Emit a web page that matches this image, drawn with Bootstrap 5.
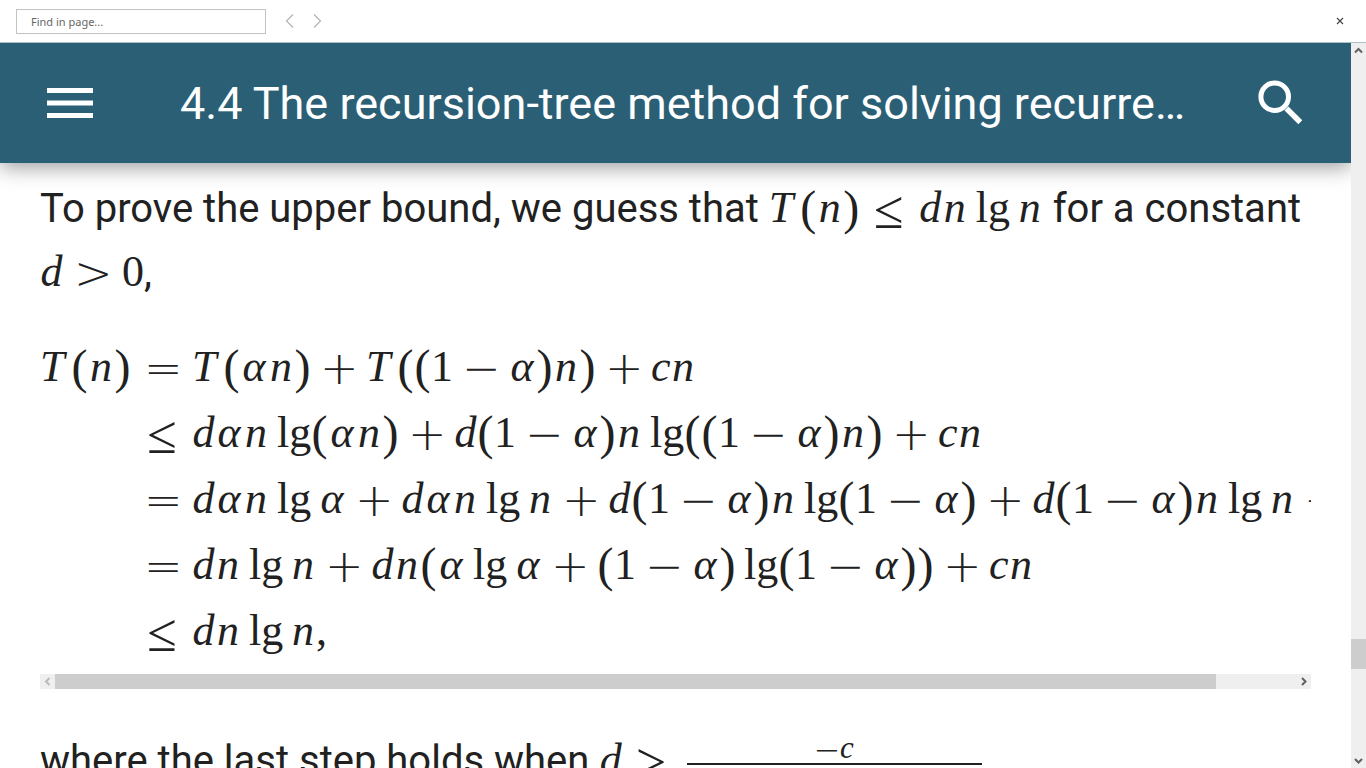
<!DOCTYPE html>
<html lang="en">
<head>
<meta charset="utf-8">
<meta name="viewport" content="width=device-width, initial-scale=1">
<title>4.4 The recursion-tree method for solving recurrences</title>
<link href="https://cdn.jsdelivr.net/npm/bootstrap@5.3.0/dist/css/bootstrap.min.css" rel="stylesheet">
<style>
body { font-family: Roboto, sans-serif; color: #212121; background: #fff; }
button { border: 0; background: none; padding: 0; line-height: 0; }
.find-bar { height: 43px; border-bottom: 1px solid #b0bec5; padding-left: 16px; padding-right: 20px; }
.find-bar input { width: 250px; height: 25px; border: 1px solid #c3c3c3; padding: 0 14px; font: 11px "Noto Sans", sans-serif; color: #666; }
.find-bar input::placeholder { color: #666; opacity: 1; }
.app-bar { height: 120px; background: #2b5f75; box-shadow: 0 4px 20px rgba(0,0,0,.4); padding: 0 47px; z-index: 1; }
.app-bar h1 { font-size: 45px; line-height: 60px; font-weight: 400; margin: 0 72px 0 87px; padding-top: 2px; }
.reader { padding: 14px 40px 0; }
.reader p { font-size: 40px; line-height: 64px; }
.track { background: #efefef; }
.thumb { background: #cdcdcd; }
.v-track { width: 15px; }
.h-track { height: 15px; margin-top: 10px; margin-bottom: 40px; }
.h-thumb { flex: 1161; }
.h-rest { flex: 80; }
.v-before { flex: 581; }
.v-thumb { height: 30px; }
.v-after { flex: 84; }
.sheet { overflow: hidden; margin-top: 29px; }
.eq-row { height: 66px; }
.lhs { width: 93px; flex: none; }

/* Maths: each symbol sits in a cell of its own advance width */
.mx { display: inline-block; white-space: nowrap; font-family: "Liberation Serif", serif; font-size: 44px; line-height: 48px; }
.eq-row .mx { line-height: 66px; }
.mx > i, .mx > b { display: inline-block; text-align: center; line-height: 48px; }
.mx b { font-weight: 400; }
.mx > .vt { width: 31px; text-align: left; }
.vn { width: 26px; } .va { width: 28px; } .vd { width: 23px; } .vc { width: 19px; }
.n1 { width: 22px; }
.pr { width: 17px; font-size: 48px; vertical-align: -2px; }
.lg { width: 34px; }
.mx > .lg { margin: 0 7px 0 8px; }
.mx > .lp { margin-right: 0; }
.mx > .rl, .mx > .op { width: 34px; font-family: "DejaVu Sans Light", "DejaVu Sans", sans-serif; font-weight: 200; font-size: 46px; vertical-align: -3px; text-indent: -2px; }
.mx > .le { font-family: "Liberation Serif", serif; font-weight: 400; font-size: 54px; vertical-align: -6px; }
.rl { margin: 0 12px 0 13px; }
.op { margin: 0 10px 0 11px; }
.frac { display: inline-flex; flex-direction: column; text-align: center; vertical-align: 16px; margin-left: 6px; height: 48px; }
.frac .mx { font-size: 31px; line-height: 30px; }
.frac .mx > * { line-height: 30px; }
.top-part { border-bottom: 2px solid #212121; height: 35px; line-height: 30px; }
.frac .va { width: 20px; } .frac .n1 { width: 16px; } .frac .vc { width: 14px; }
.frac .pr { width: 12px; font-size: 34px; }
.frac .mx > .op { width: 24px; font-size: 32px; margin: 0; }
.frac .mx > .lg { width: 24px; margin: 0 5px; }
.frac .mx > .lp { margin-right: 0; }
</style>
</head>
<body>
<div class="vh-100 d-flex flex-column overflow-hidden">
  <form class="find-bar d-flex align-items-center flex-shrink-0" role="search">
    <input type="text" placeholder="Find in page..." aria-label="Find in page">
    <button type="button" class="ms-3" aria-label="Previous result"><svg width="16" height="16" viewBox="0 0 16 16" fill="none" stroke="#b4b4b4" stroke-width="1.200"><path d="M11 1.500 4.500 8 11 14.500"/></svg></button>
    <button type="button" class="ms-2" aria-label="Next result"><svg width="18" height="16" viewBox="0 0 18 16" fill="none" stroke="#b4b4b4" stroke-width="1.200"><path d="M8 1.500 14.500 8 8 14.500"/></svg></button>
    <button type="button" class="ms-auto" aria-label="Close"><svg width="12" height="12" viewBox="0 0 12 12" stroke="#444" stroke-width="1.200"><path d="m3 3 6 6m0-6-6 6"/></svg></button>
  </form>
  <div class="d-flex flex-grow-1 overflow-hidden">
    <div class="d-flex flex-column flex-grow-1 overflow-hidden">
      <header class="app-bar d-flex align-items-center flex-shrink-0 position-relative">
        <button type="button" aria-label="Menu"><svg width="46" height="32" viewBox="0 0 46 32" fill="#fff"><path d="M0 1h46v5H0zM0 13.500h46v5H0zM0 26h46v5H0z"/></svg></button>
        <h1 class="text-truncate text-white flex-grow-1">4.4 The recursion-tree method for solving recurrences</h1>
        <button type="button" aria-label="Search"><svg width="46" height="46" viewBox="0 0 46 46" fill="none" stroke="#fff"><circle cx="16.700" cy="16.700" r="13.800" stroke-width="5"/><path d="m28.500 28.500 13.800 13.800" stroke-width="5.500"/></svg></button>
      </header>
      <main class="reader overflow-hidden flex-grow-1">
        <p class="mb-0">To prove the upper bound, we guess that <span class="mx"><i class="vt">T</i><b class="pr">(</b><i class="vn">n</i><b class="pr">)</b><b class="rl le">≤</b><i class="vd">d</i><i class="vn">n</i><b class="lg">lg</b><i class="vn">n</i></span> for a constant <span class="mx"><i class="vd">d</i><b class="rl">&gt;</b><b class="n1">0</b></span>,</p>
        <div class="sheet">
          <div class="eq-row d-flex"><div class="lhs mx"><i class="vt">T</i><b class="pr">(</b><i class="vn">n</i><b class="pr">)</b></div>
            <div class="mx"><b class="rl">=</b><i class="vt">T</i><b class="pr">(</b><i class="va">α</i><i class="vn">n</i><b class="pr">)</b><b class="op">+</b><i class="vt">T</i><b class="pr">(</b><b class="pr">(</b><b class="n1">1</b><b class="op">−</b><i class="va">α</i><b class="pr">)</b><i class="vn">n</i><b class="pr">)</b><b class="op">+</b><i class="vc">c</i><i class="vn">n</i></div></div>
          <div class="eq-row d-flex"><div class="lhs"></div>
            <div class="mx"><b class="rl le">≤</b><i class="vd">d</i><i class="va">α</i><i class="vn">n</i><b class="lg lp">lg</b><b class="pr">(</b><i class="va">α</i><i class="vn">n</i><b class="pr">)</b><b class="op">+</b><i class="vd">d</i><b class="pr">(</b><b class="n1">1</b><b class="op">−</b><i class="va">α</i><b class="pr">)</b><i class="vn">n</i><b class="lg lp">lg</b><b class="pr">(</b><b class="pr">(</b><b class="n1">1</b><b class="op">−</b><i class="va">α</i><b class="pr">)</b><i class="vn">n</i><b class="pr">)</b><b class="op">+</b><i class="vc">c</i><i class="vn">n</i></div></div>
          <div class="eq-row d-flex"><div class="lhs"></div>
            <div class="mx"><b class="rl">=</b><i class="vd">d</i><i class="va">α</i><i class="vn">n</i><b class="lg">lg</b><i class="va">α</i><b class="op">+</b><i class="vd">d</i><i class="va">α</i><i class="vn">n</i><b class="lg">lg</b><i class="vn">n</i><b class="op">+</b><i class="vd">d</i><b class="pr">(</b><b class="n1">1</b><b class="op">−</b><i class="va">α</i><b class="pr">)</b><i class="vn">n</i><b class="lg lp">lg</b><b class="pr">(</b><b class="n1">1</b><b class="op">−</b><i class="va">α</i><b class="pr">)</b><b class="op">+</b><i class="vd">d</i><b class="pr">(</b><b class="n1">1</b><b class="op">−</b><i class="va">α</i><b class="pr">)</b><i class="vn">n</i><b class="lg">lg</b><i class="vn">n</i><b class="op">+</b><i class="vc">c</i><i class="vn">n</i></div></div>
          <div class="eq-row d-flex"><div class="lhs"></div>
            <div class="mx"><b class="rl">=</b><i class="vd">d</i><i class="vn">n</i><b class="lg">lg</b><i class="vn">n</i><b class="op">+</b><i class="vd">d</i><i class="vn">n</i><b class="pr">(</b><i class="va">α</i><b class="lg">lg</b><i class="va">α</i><b class="op">+</b><b class="pr">(</b><b class="n1">1</b><b class="op">−</b><i class="va">α</i><b class="pr">)</b><b class="lg lp">lg</b><b class="pr">(</b><b class="n1">1</b><b class="op">−</b><i class="va">α</i><b class="pr">)</b><b class="pr">)</b><b class="op">+</b><i class="vc">c</i><i class="vn">n</i></div></div>
          <div class="eq-row d-flex"><div class="lhs"></div>
            <div class="mx"><b class="rl le">≤</b><i class="vd">d</i><i class="vn">n</i><b class="lg">lg</b><i class="vn">n</i><b>,</b></div></div>
        </div>
        <div class="track h-track d-flex">
          <button type="button" aria-label="Scroll left"><svg width="15" height="15" viewBox="0 0 15 15" fill="none" stroke="#bbb" stroke-width="2"><path d="M9.500 4 6 7.500 9.500 11"/></svg></button>
          <div class="thumb h-thumb"></div><div class="h-rest"></div>
          <button type="button" aria-label="Scroll right"><svg width="15" height="15" viewBox="0 0 15 15" fill="none" stroke="#606060" stroke-width="2"><path d="M6 4 9.500 7.500 6 11"/></svg></button>
        </div>
        <p class="mb-0 text-nowrap">where the last step holds when <span class="mx"><i class="vd">d</i><b class="rl le">≥</b></span><span class="frac"><span class="top-part"><span class="mx"><b class="op">−</b><i class="vc">c</i></span></span><span class="mx"><i class="va">α</i><b class="lg">lg</b><i class="va">α</i><b class="op">+</b><b class="pr">(</b><b class="n1">1</b><b class="op">−</b><i class="va">α</i><b class="pr">)</b><b class="lg lp">lg</b><b class="pr">(</b><b class="n1">1</b><b class="op">−</b><i class="va">α</i><b class="pr">)</b></span></span></p>
      </main>
    </div>
    <div class="track v-track d-flex flex-column flex-shrink-0">
      <button type="button" aria-label="Scroll up"><svg width="15" height="15" viewBox="0 0 15 15" fill="none" stroke="#606060" stroke-width="2"><path d="M4 9.500 7.500 6 11 9.500"/></svg></button>
      <div class="v-before"></div><div class="thumb v-thumb"></div><div class="v-after"></div>
      <button type="button" aria-label="Scroll down"><svg width="15" height="15" viewBox="0 0 15 15" fill="none" stroke="#606060" stroke-width="2"><path d="M4 6 7.500 9.500 11 6"/></svg></button>
    </div>
  </div>
</div>
<script src="https://cdn.jsdelivr.net/npm/bootstrap@5.3.0/dist/js/bootstrap.bundle.min.js"></script>
</body>
</html>
